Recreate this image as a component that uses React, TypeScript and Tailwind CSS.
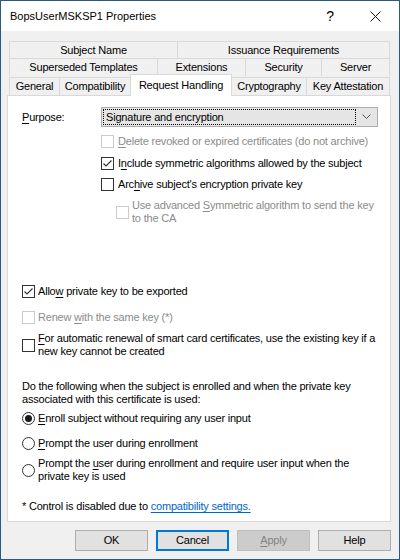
const FONT = { fontFamily: '"Liberation Sans", Arial, sans-serif' }

const U = ({ children }: { children: React.ReactNode }) => (
  <span className="underline underline-offset-2">{children}</span>
)

const CheckBox = ({ checked = false, disabled = false }) => (
  <div
    className={`h-[13px] w-[13px] shrink-0 border bg-white ${
      disabled ? 'border-[#cccccc]' : 'border-[#333333]'
    }`}
  >
    {checked && (
      <svg width="11" height="11" viewBox="0 0 11 11">
        <path d="M1.5 5.5 L4 8 L9.5 2.5" fill="none" stroke="#333333" strokeWidth="1.1" />
      </svg>
    )}
  </div>
)

const Radio = ({ checked = false }) => (
  <div className="flex h-[13px] w-[13px] shrink-0 items-center justify-center rounded-full border border-[#333333] bg-white">
    {checked && <div className="h-[7px] w-[7px] rounded-full bg-[#1a1a1a]" />}
  </div>
)

const TabRow = ({ tabs, className = '' }) => (
  <div className={`ml-[2px] flex w-[381px] ${className}`}>
    {tabs.map((t, i) => (
      <div
        key={t.label}
        style={{ width: t.w }}
        className={`flex items-center justify-center border-l border-t border-[#d9d9d9] ${
          i === tabs.length - 1 ? 'border-r' : ''
        }`}
      >
        {t.label}
      </div>
    ))}
  </div>
)

const Btn = ({ children, focused = false, disabled = false }) => (
  <div
    className={`flex h-[21px] w-[73px] items-center justify-center ${
      focused
        ? 'border-2 border-[#0078d7] bg-[#e1e1e1]'
        : disabled
          ? 'border border-[#bfbfbf] bg-[#cccccc] text-[#838383]'
          : 'border border-[#adadad] bg-[#e1e1e1]'
    }`}
  >
    {children}
  </div>
)

export default function App() {
  return (
    <div
      style={FONT}
      className="flex h-[560px] w-[400px] flex-col border border-[#2b5a80] text-[11px] leading-[13px] tracking-[-0.2px] text-black"
    >
      <div className="flex h-[30px] items-center bg-white pl-[9px] pr-[18px] tracking-normal">
        <div className="flex-1">BopsUserMSKSP1 Properties</div>
        <div className="mr-[36px] text-[14px]">?</div>
        <svg width="11" height="11" viewBox="0 0 11 11">
          <path d="M0.5 0.5 L10.5 10.5 M10.5 0.5 L0.5 10.5" stroke="#111" strokeWidth="1" />
        </svg>
      </div>

      <div className="flex flex-1 flex-col bg-[#f0f0f0] pl-[6px] pr-[8px] pt-[10px]">
        <TabRow
          className="h-[17px]"
          tabs={[
            { label: 'Subject Name', w: 168 },
            { label: 'Issuance Requirements', w: 213 },
          ]}
        />
        <TabRow
          className="h-[18px]"
          tabs={[
            { label: 'Superseded Templates', w: 148 },
            { label: 'Extensions', w: 88 },
            { label: 'Security', w: 76 },
            { label: 'Server', w: 69 },
          ]}
        />
        <div className="relative z-10 -mb-px ml-[2px] flex h-[20px] w-[381px] items-end">
          {[
            { label: 'General', w: 50 },
            { label: 'Compatibility', w: 71 },
            { label: 'Request Handling', w: 102, sel: true },
            { label: 'Cryptography', w: 74 },
            { label: 'Key Attestation', w: 84 },
          ].map((t, i, arr) =>
            t.sel ? (
              <div
                key={t.label}
                style={{ width: t.w }}
                className="-mt-[2px] flex h-[22px] items-start justify-center self-end border-l border-r border-t border-[#d9d9d9] bg-white pt-[4px]"
              >
                {t.label}
              </div>
            ) : (
              <div
                key={t.label}
                style={{ width: t.w }}
                className={`flex h-[19px] items-center justify-center border-t border-[#d9d9d9] ${
                  i === arr.length - 1 ? 'border-r' : ''
                } ${i === 0 || !arr[i - 1].sel ? 'border-l' : ''} border-b`}
              >
                {t.label}
              </div>
            ),
          )}
        </div>

        <div className="flex h-[427px] w-[384px] flex-col border border-[#d9d9d9] bg-white">
          <div className="mt-[11px] flex h-[20px] items-center">
            <div className="w-[93px] pl-[14px]">
              <U>P</U>urpose:
            </div>
            <div className="flex h-[20px] w-[277px] items-center border border-[#adadad] bg-[#e5e5e5] pl-[1px] pr-[6px]">
              <div className="flex h-[16px] flex-1 items-center border border-dotted border-black pl-[2px]">
                Signature and encryption
              </div>
              <svg className="ml-[6px]" width="9" height="6" viewBox="0 0 9 6">
                <path d="M0.5 0.5 L4.5 4.5 L8.5 0.5" fill="none" stroke="#555" strokeWidth="1" />
              </svg>
            </div>
          </div>

          <div className="ml-[93px] mt-[8px] flex items-center gap-[4px] text-[#8b8b8b]">
            <CheckBox disabled />
            <div>
              <U>D</U>elete revoked or expired certificates (do not archive)
            </div>
          </div>
          <div className="ml-[93px] mt-[9px] flex items-center gap-[4px]">
            <CheckBox checked />
            <div>
              I<U>n</U>clude symmetric algorithms allowed by the subject
            </div>
          </div>
          <div className="ml-[93px] mt-[8px] flex items-center gap-[4px]">
            <CheckBox />
            <div>
              Arc<U>h</U>ive subject's encryption private key
            </div>
          </div>
          <div className="ml-[108px] mt-[8px] flex items-center gap-[3px] text-[#8b8b8b]">
            <CheckBox disabled />
            <div className="whitespace-nowrap">
              Use advanced <U>S</U>ymmetric algorithm to send the key
              <br />
              to the CA
            </div>
          </div>

          <div className="ml-[14px] mt-[60px] flex items-center gap-[3px]">
            <CheckBox checked />
            <div>
              Allo<U>w</U> private key to be exported
            </div>
          </div>
          <div className="ml-[14px] mt-[13px] flex items-center gap-[3px] text-[#8b8b8b]">
            <CheckBox disabled />
            <div>
              Renew <U>w</U>ith the same key (*)
            </div>
          </div>
          <div className="ml-[14px] mt-[8px] flex items-center gap-[3px]">
            <CheckBox />
            <div className="whitespace-nowrap">
              <U>F</U>or automatic renewal of smart card certificates, use the existing key if a
              <br />
              new key cannot be created
            </div>
          </div>

          <div className="ml-[14px] mt-[22px] whitespace-nowrap">
            Do the following when the subject is enrolled and when the private key
            <br />
            associated with this certificate is used:
          </div>
          <div className="ml-[14px] mt-[6px] flex items-center gap-[3px]">
            <Radio checked />
            <div>
              <U>E</U>nroll subject without requiring any user input
            </div>
          </div>
          <div className="ml-[14px] mt-[12px] flex items-center gap-[3px]">
            <Radio />
            <div>
              <U>P</U>rompt the user during enrollment
            </div>
          </div>
          <div className="ml-[14px] mt-[7px] flex items-center gap-[3px]">
            <Radio />
            <div className="whitespace-nowrap">
              Prompt the <U>u</U>ser during enrollment and require user input when the
              <br />
              private key is used
            </div>
          </div>
          <div className="ml-[14px] mt-[17px]">
            * Control is disabled due to{' '}
            <span className="text-[#0066cc] underline underline-offset-2">
              compatibility settings.
            </span>
          </div>
        </div>

        <div className="mt-[8px] flex justify-end gap-[8px]">
          <Btn>OK</Btn>
          <Btn focused>Cancel</Btn>
          <Btn disabled>
            <span>
              <U>A</U>pply
            </span>
          </Btn>
          <Btn>Help</Btn>
        </div>
      </div>
    </div>
  )
}
